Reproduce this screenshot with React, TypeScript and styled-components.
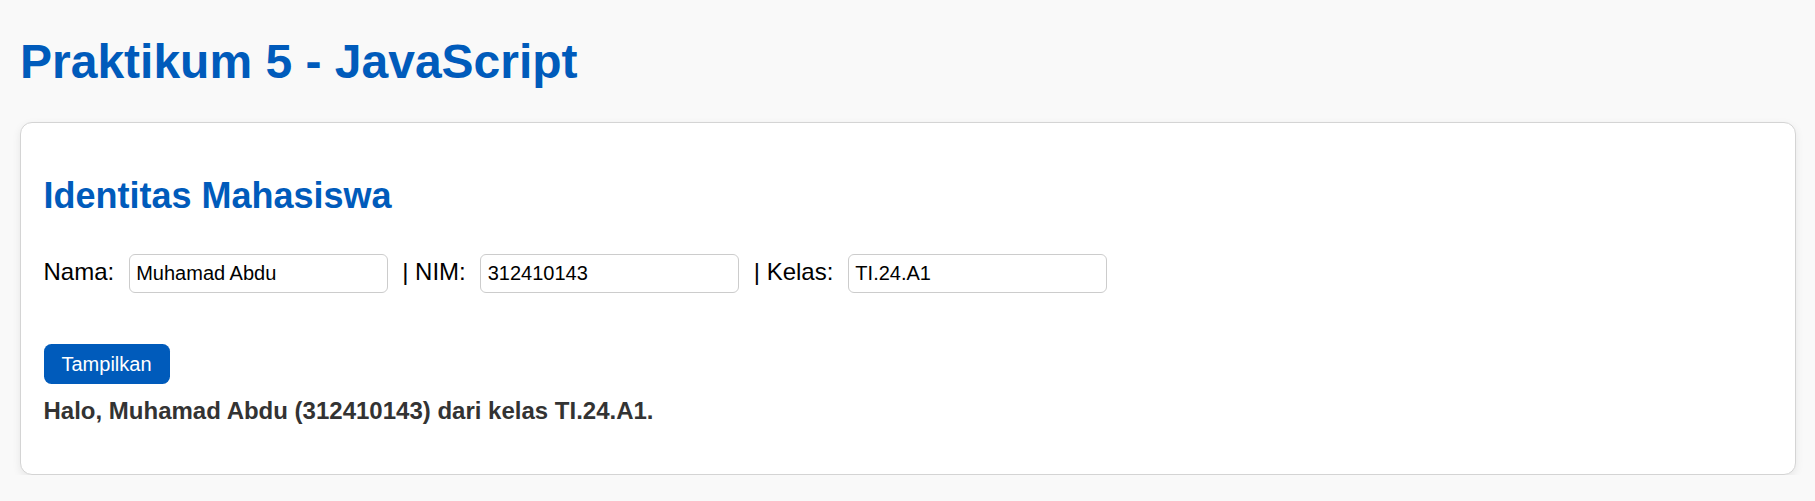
import React, { useState } from "react";
import styled, { createGlobalStyle } from "styled-components";

const GlobalStyle = createGlobalStyle`
  html, body {
    margin: 0;
    padding: 0;
    background: #f9f9f9;
  }
  body {
    font-family: "Liberation Sans", Arial, sans-serif;
    color: #000;
  }
  * { box-sizing: border-box; }
`;

const Page = styled.main`
  padding: 34.3px 19px 0 20px;
`;

const Title = styled.h1`
  margin: 0 0 32.4px 0;
  font-size: 48px;
  line-height: 55px;
  font-weight: 700;
  color: #005bbb;
`;

const Card = styled.section`
  background: #ffffff;
  border: 1px solid #d4d4d4;
  border-radius: 12px;
  box-shadow: 0 3px 9px rgba(0, 0, 0, 0.08);
  padding: 22.5px;
`;

const Heading = styled.h2`
  margin: 30px 0 37.7px 0;
  font-size: 36px;
  line-height: 41px;
  font-weight: 700;
  color: #005bbb;
`;

const FieldRow = styled.div`
  display: flex;
  align-items: baseline;
  gap: 14.5px;
  margin-bottom: 51px;
`;

const Label = styled.label`
  font-size: 24px;
  line-height: 28px;
  color: #000;
  white-space: pre;
`;

const TextInput = styled.input`
  width: 259px;
  height: 39px;
  padding: 0 6.5px;
  border: 1px solid #cccccc;
  border-radius: 6px;
  background: #fff;
  font-family: "Liberation Sans", Arial, sans-serif;
  font-size: 20px;
  color: #000;
  outline: none;
`;

const ShowButton = styled.button`
  display: block;
  padding: 9px 18px;
  border: none;
  border-radius: 7.5px;
  background: #005bbb;
  color: #ffffff;
  font-family: "Liberation Sans", Arial, sans-serif;
  font-size: 20px;
  line-height: 22px;
  cursor: pointer;
`;

const Greeting = styled.p`
  margin: 13.2px 0 26px 0;
  font-size: 24px;
  line-height: 28px;
  font-weight: 700;
  color: #333333;
`;

export default function App() {
  const [nama, setNama] = useState("Muhamad Abdu");
  const [nim, setNim] = useState("312410143");
  const [kelas, setKelas] = useState("TI.24.A1");
  const [output, setOutput] = useState(
    "Halo, Muhamad Abdu (312410143) dari kelas TI.24.A1."
  );

  const tampilkan = () => {
    setOutput(`Halo, ${nama} (${nim}) dari kelas ${kelas}.`);
  };

  return (
    <>
      <GlobalStyle />
      <Page>
        <Title>Praktikum 5 - JavaScript</Title>
        <Card>
          <Heading>Identitas Mahasiswa</Heading>
          <FieldRow>
            <Label htmlFor="nama">Nama:</Label>
            <TextInput id="nama" value={nama} onChange={(e) => setNama(e.target.value)} />
            <Label htmlFor="nim">| NIM:</Label>
            <TextInput id="nim" value={nim} onChange={(e) => setNim(e.target.value)} />
            <Label htmlFor="kelas">| Kelas:</Label>
            <TextInput id="kelas" value={kelas} onChange={(e) => setKelas(e.target.value)} />
          </FieldRow>
          <ShowButton type="button" onClick={tampilkan}>
            Tampilkan
          </ShowButton>
          <Greeting>{output}</Greeting>
        </Card>
      </Page>
    </>
  );
}
